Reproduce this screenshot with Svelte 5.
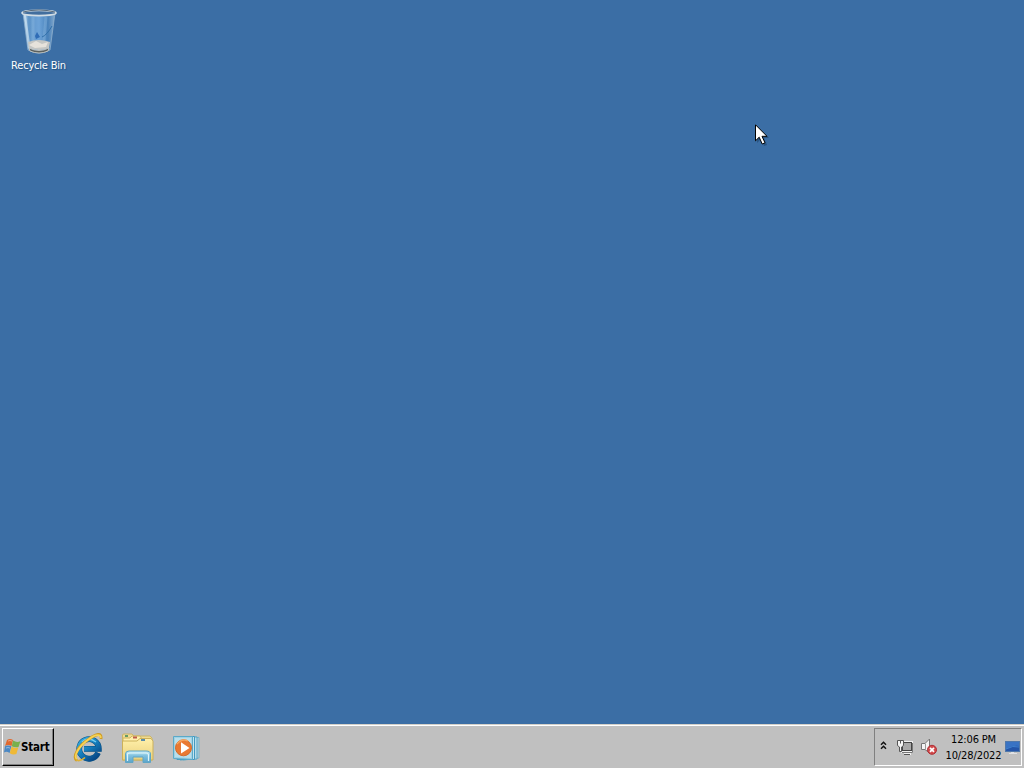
<script lang="ts">
	const time = '12:06 PM';
	const date = '10/28/2022';
</script>

<main class="desktop">
	<section class="workspace">
		<div class="shortcut">
			<svg width="48" height="48" viewBox="0 0 48 48">
				<defs>
					<linearGradient id="glass" x1="0" x2="1">
						<stop offset="0" stop-color="#bcd8ee" />
						<stop offset=".18" stop-color="#5e94c8" />
						<stop offset=".5" stop-color="#6da3d8" />
						<stop offset=".78" stop-color="#4780b9" />
						<stop offset="1" stop-color="#86aacd" />
					</linearGradient>
				</defs>
				<path d="M8 7 L13 44 Q24 50 35 44 L40 7 Z" fill="url(#glass)" stroke="#8fb0cd" stroke-width=".8" />
				<path d="M9 9 L13 42 L16 45 L11 9 Z" fill="#dcecf6" opacity=".6" />
				<path d="M18 11 L18 35 M31 11 L29 34" stroke="#93bfe5" stroke-width="3" opacity=".35" />
				<path d="M20 30 L22 26 L25 31 L21 33 Z" fill="#215fae" opacity=".8" />
				<path d="M27 31 Q32 29 37 20" fill="none" stroke="#306fa9" stroke-width="1" />
				<path d="M13 36 Q24 32 35 36 L34 42 Q24 46 14 42 Z" fill="#c4c6c4" />
				<path d="M14 39 L21 35 L27 38 L33 36 L31 41 L20 42 Z" fill="#e6e2db" />
				<path d="M14 42 Q24 47 34 42 L33 45 Q24 49 15 45 Z" fill="#5c615f" stroke="#d0d1cc" stroke-width=".8" />
				<ellipse cx="24" cy="7" rx="17" ry="2.6" fill="#426e9e" stroke="#d1dce4" stroke-width="1.6" />
				<path d="M8 6 Q24 2 40 6" fill="none" stroke="#56697b" stroke-width="1" />
			</svg>
			<span>Recycle Bin</span>
		</div>
		<svg class="pointer" width="14" height="23" viewBox="0 0 14 23">
			<path d="M2 2 V19 L6 15 L9 22 L12 21 L9 14 H14 Z" fill="#183c62" opacity=".5" />
			<path d="M.5 .8 V16.8 L4.2 13.2 L7.2 20 L10 18.8 L7 12.3 H12 Z" fill="#fff" stroke="#000" />
		</svg>
	</section>

	<footer class="taskbar">
		<button class="start">
			<svg width="17" height="18" viewBox="0 0 17 18">
				<path d="M3 2 Q6 0 9 2 L7.5 8 Q4 6 1 8 Z" fill="#e0682e" />
				<path d="M9 2.5 Q13 5 16.5 3 L14.5 9 Q11 10 7.8 8.2 Z" fill="#78b04c" />
				<path d="M1 8.3 Q4 6.7 7.3 8.3 L5.6 15 Q2.5 13 0 14.5 Z" fill="#4b88c4" />
				<path d="M7.5 8.8 Q11 10.6 14.3 9.4 L12.4 16 Q9 17.2 5.8 15.2 Z" fill="#efb936" />
				<path d="M4 3 Q6 2 8 3 M2 10 Q4 9 6 10" fill="none" stroke="#fff" stroke-width="1" opacity=".4" />
			</svg>
			<span>Start</span>
		</button>

		<nav class="launchers">
			<svg width="32" height="32" viewBox="0 0 32 32">
				<defs>
					<linearGradient id="ie" x2=".8" y2="1">
						<stop stop-color="#35aee3" />
						<stop offset=".5" stop-color="#167fbd" />
						<stop offset="1" stop-color="#074887" />
					</linearGradient>
				</defs>
				<path d="M26 20.8 A9.8 9.8 0 1 1 26.8 16.8 H12" fill="none" stroke="#075083" stroke-width="5.8" />
				<path d="M26 20.8 A9.8 9.8 0 1 1 26.8 16.8 H12" fill="none" stroke="url(#ie)" stroke-width="4.8" />
				<path d="M10 10 Q16 4 24 10" fill="none" stroke="#75cdf0" stroke-width="1.3" />
				<path d="M5 28.5 C0 25 6 14 17 7 C24 2 30 0 29 7" fill="none" stroke="#cf9b24" stroke-width="2.8" />
				<path d="M5 27.5 C1 24 7 14 17 7 C24 2 29 2 28.7 6" fill="none" stroke="#f6d355" stroke-width="1.8" />
				<path d="M4 27.5 Q7 30.5 13 25.5" fill="none" stroke="#ddb137" stroke-width="1.6" />
			</svg>
			<svg width="34" height="32" viewBox="0 0 34 32">
				<defs>
					<linearGradient id="folder" x2="0" y2="1">
						<stop stop-color="#fff0aa" />
						<stop offset="1" stop-color="#ead07c" />
					</linearGradient>
					<linearGradient id="library" x2="0" y2="1">
						<stop stop-color="#c9eef8" />
						<stop offset=".4" stop-color="#81c2df" />
						<stop offset="1" stop-color="#5ba4ca" />
					</linearGradient>
				</defs>
				<path d="M1.5 3 Q1.5 2 3 2 H11 L13 4 H29 L31 6 V28 H1.5 Z" fill="#efda92" stroke="#cab569" />
				<path d="M2 6 H9 L11 4 H19 L21 7 H30 V25 H2 Z" fill="#ffefab" stroke="#d0b65e" />
				<path d="M1.5 9 H16 L19 6.5 H30 L32 9 V28 H1.5 Z" fill="url(#folder)" stroke="#ccb15a" />
				<path d="M4 4 H7" stroke="#659b64" stroke-width="2" />
				<path d="M12 5.5 H16" stroke="#bc5d4d" stroke-width="2" />
				<path d="M20 8 H24" stroke="#4881aa" stroke-width="1.8" />
				<path d="M4.5 30.5 V22 Q4.5 19 8 19 H25 Q29.5 19 29.5 22 V30.5 H22 V25 H12 V30.5 Z" fill="url(#library)" stroke="#5fa5c5" />
				<path d="M6.5 29 V22 Q6.5 21 9 21 H25 Q27.5 21 27.5 23 V29" fill="none" stroke="#def5f9" stroke-width="1.2" />
			</svg>
			<svg width="32" height="32" viewBox="0 0 32 32">
				<path d="M11 4.5 L27 5.5 V26 L11 28 Z" fill="#b4d0da" stroke="#6fb0c9" stroke-width=".8" />
				<path d="M8 4.5 L25 5 V27 L8 28 Z" fill="#b9dce8" stroke="#4ba0c4" stroke-width=".9" />
				<path d="M5 4.5 H22.5 V27.5 L5 27.5 Z" fill="#c5e4ee" stroke="#4299c0" />
				<path d="M1.5 4.5 H20.5 V27.5 L1.5 26.5 Z" fill="#9fd2e5" stroke="#5ba9c8" />
				<path d="M3 6 H19 V26 L3 25 Z" fill="#b9deea" />
				<circle cx="11.5" cy="15.8" r="8" fill="#e97932" stroke="#d46a29" />
				<path d="M5 12 Q10 6 16 9" fill="none" stroke="#f5a45f" stroke-width="1.3" />
				<path d="M9 10.2 L17.5 16 L9 21.5 Z" fill="#fff" />
			</svg>
		</nav>

		<aside class="tray">
			<svg class="chevrons" width="7" height="9" viewBox="0 0 7 9">
				<path d="M1 3.7 L3.5 1.2 L6 3.7 M1 7.7 L3.5 5.2 L6 7.7" fill="none" stroke="#111" stroke-width="1.5" />
			</svg>
			<svg class="network" width="17" height="17" viewBox="0 0 17 17">
				<rect x="4" y="2" width="12" height="12" fill="#f0f0f0" />
				<rect x="5.5" y="3.5" width="9" height="8" fill="#a8a8a8" stroke="#444" />
				<path d="M5 13.5 H15.5 V4" fill="none" stroke="#777" />
				<path d="M7 15 H14" stroke="#f0f0f0" stroke-width="2" />
				<path d="M7 15.5 H13" stroke="#555" />
				<path d="M.5 1.5 H6.5 V6.5 L4.5 8 V12.5 H2.5 V8 L.5 6.5 Z" fill="#f4f4f4" stroke="#555" />
				<path d="M3.5 1 V4.5" stroke="#555" />
			</svg>
			<svg class="sound" width="17" height="18" viewBox="0 0 17 18">
				<path d="M.5 5.5 H4 L8.5 1 V15 L4 11.5 H.5 Z" fill="#f4f4f4" stroke="#777" />
				<path d="M4.5 5.5 V11.5" stroke="#999" />
				<circle cx="11" cy="11.8" r="4.5" fill="#d34b4c" stroke="#ad3037" />
				<path d="M9 9.8 L13 13.8 M13 9.8 L9 13.8" stroke="#fff" stroke-width="1.7" />
			</svg>
			<div class="clock">
				<time>{time}</time>
				<time class="date">{date}</time>
			</div>
			<svg class="show-desktop" width="16" height="14" viewBox="0 0 16 14">
				<rect x=".5" y=".5" width="14" height="10" fill="#2455a9" stroke="#5078aa" />
				<path d="M1 1 H14 V5 Q8 4 1 8 Z" fill="#3973c4" />
				<path d="M1 8 Q8 4 14 6" fill="none" stroke="#3f82cf" />
				<path d="M6 11 H9 V12 H12 V13 H4 V12 H6 Z" fill="#e0e1e3" />
			</svg>
		</aside>
	</footer>
</main>

<style>
	:global(body) {
		margin: 0;
		overflow: hidden;
	}

	.desktop {
		width: 1024px;
		height: 768px;
		display: flex;
		flex-direction: column;
		position: relative;
		background: #3b6ea5;
		font-family: 'DejaVu Sans Condensed', 'DejaVu Sans', sans-serif;
		font-stretch: condensed;
		font-size: 11px;
		cursor: default;
	}

	.workspace {
		flex: 1;
	}

	.shortcut {
		width: 77px;
		padding-top: 6px;
		display: flex;
		flex-direction: column;
		align-items: center;
		color: #fff;
		line-height: 14px;
		letter-spacing: -0.2px;
	}

	.shortcut svg {
		margin-left: 1px;
		margin-bottom: 5px;
	}

	.shortcut span {
		text-shadow: 1px 1px 1px #24527f;
		white-space: nowrap;
	}

	.pointer {
		position: absolute;
		left: 755px;
		top: 124px;
	}

	.taskbar {
		box-sizing: border-box;
		height: 44px;
		display: flex;
		align-items: flex-start;
		padding: 3px 2px 0 2px;
		border-top: 1px solid #d4d0c8;
		background: #c0c0c0;
		box-shadow: inset 0 1px #fff;
	}

	.start {
		box-sizing: border-box;
		width: 52px;
		height: 38px;
		padding: 0 0 1px 1px;
		display: flex;
		align-items: center;
		border: 1px solid;
		border-color: #fff #000 #000 #fff;
		border-radius: 0;
		box-shadow: inset -1px -1px #808080;
		background: #c0c0c0;
		color: #000;
		font: bold 11.5px/14px 'DejaVu Sans Condensed', 'DejaVu Sans', sans-serif;
		font-stretch: condensed;
		letter-spacing: -0.2px;
	}

	.start svg {
		flex: none;
	}

	.start span {
		padding-top: 1px;
	}

	.launchers {
		display: flex;
		align-items: center;
		gap: 17px;
		padding: 4px 0 0 18px;
	}

	.tray {
		box-sizing: border-box;
		width: 148px;
		height: 38px;
		margin-left: auto;
		padding-left: 5px;
		display: flex;
		align-items: center;
		border: 1px solid;
		border-color: #808080 #fff #fff #808080;
	}

	.tray svg {
		flex: none;
	}

	.chevrons {
		margin-bottom: 3px;
	}

	.network {
		margin-left: 10px;
	}

	.sound {
		margin-left: 7px;
	}

	.clock {
		width: 59px;
		margin-left: 6px;
		padding-top: 1px;
		display: flex;
		flex-direction: column;
		align-items: center;
		line-height: 16px;
		letter-spacing: -0.15px;
		white-space: nowrap;
	}

	.date {
		letter-spacing: -0.1px;
	}

	.show-desktop {
		margin-left: 2px;
		margin-top: 2px;
	}
</style>
